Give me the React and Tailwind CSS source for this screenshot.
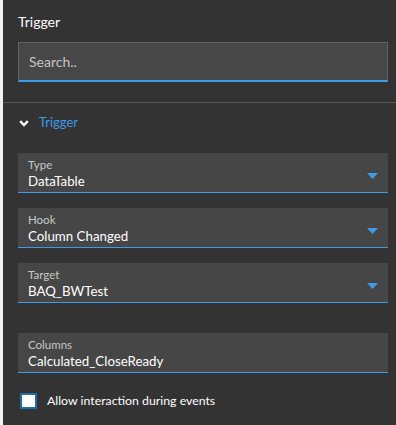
import React from 'react';

const Field = ({ label, value, dropdown }) => (
  <div className="relative bg-[#464646] border-b border-[#3d9be9] h-10 pl-[10px] pt-[5px]">
    <div className="text-[11.5px] leading-[14px] text-[#c8c8c8]">{label}</div>
    <div className="text-[13.3px] leading-[18px] text-white">{value}</div>
    {dropdown && (
      <svg className="absolute right-[10px] top-[20px]" width="11" height="6" viewBox="0 0 11 6">
        <path d="M0 0 H11 L5.5 6 Z" fill="#3d9be9" />
      </svg>
    )}
  </div>
);

export default function App() {
  return (
    <div className="flex w-[396px] h-[425px] overflow-hidden" style={{ fontFamily: 'Lato, "Open Sans", sans-serif' }}>
      <div className="w-[3px] bg-[#f0f1f3]" />
      <div className="flex-1 bg-[#333333] flex flex-col">
        <div className="pl-[15px] pr-[8px] pt-[12px]">
          <div className="text-[14px] leading-[20px] text-white">Trigger</div>
          <div className="mt-[10px] h-10 bg-[#474747] border border-[#636363] border-b-2 border-b-[#3d9be9] flex items-center pl-[10px]">
            <span className="text-[14px] text-[#c4c4c4]">Search..</span>
          </div>
        </div>
        <div className="mt-5 h-px bg-[#555555]" />
        <div className="pl-[15px] pr-[8px] pt-[10px]">
          <div className="flex items-center h-5 gap-[10px] pl-[1px]">
            <svg width="10" height="7" viewBox="0 0 10 7">
              <path d="M1.2 1.2 L5 5 L8.8 1.2" stroke="white" strokeWidth="2.4" fill="none" />
            </svg>
            <span className="text-[13px] text-[#3d9be9]">Trigger</span>
          </div>
          <div className="mt-5 flex flex-col gap-[15px]">
            <Field label="Type" value="DataTable" dropdown />
            <Field label="Hook" value="Column Changed" dropdown />
            <Field label="Target" value="BAQ_BWTest" dropdown />
          </div>
          <div className="mt-[30px]">
            <Field label="Columns" value="Calculated_CloseReady" />
          </div>
          <div className="mt-[19px] flex items-center gap-[10px] pl-[2px]">
            <div className="w-[17px] h-[16px] bg-white border-2 border-[#1e6fa8]" />
            <span className="text-[12.3px] text-white">Allow interaction during events</span>
          </div>
        </div>
      </div>
    </div>
  );
}
